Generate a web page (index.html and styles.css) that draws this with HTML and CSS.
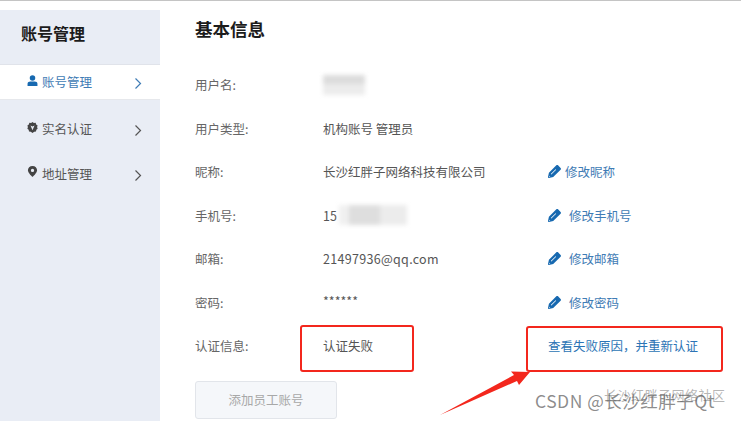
FILE: index.html
```
<!DOCTYPE html>
<html lang="zh">
<head>
<meta charset="utf-8">
<title>账号管理</title>
<link rel="stylesheet" href="styles.css">
</head>
<body>
<div class="page">
  <aside class="side">
    <h2 class="side-title">账号管理</h2>
    <a class="nav active">
      <svg class="nav-icon" viewBox="0 0 12 12"><circle cx="6" cy="3.2" r="3"/><path d="M.6 12V9.6C.6 7.9 2 7 3.6 7h4.800C10 7 11.400 7.900 11.400 9.600V12Z"/></svg>
      <span class="nav-text">账号管理</span>
      <svg class="chev" viewBox="0 0 8 12"><path d="M1.500 1 6.500 6 1.500 11"/></svg>
    </a>
    <a class="nav">
      <svg class="nav-icon" viewBox="0 0 12 12"><path fill-rule="evenodd" d="M6 0 7.500 1.100 9.400 .9 10 2.700 11.600 3.700 11 5.500 11.600 7.300 10.200 8.500 9.800 10.400 7.900 10.500 6 12 4.100 10.500 2.200 10.400 1.800 8.500.4 7.300 1 5.500.4 3.700 2 2.700 2.600.9 4.500 1.100ZM3.800 3.800 6 9 8.200 3.800 6 4.800Z"/></svg>
      <span class="nav-text">实名认证</span>
      <svg class="chev" viewBox="0 0 8 12"><path d="M1.500 1 6.500 6 1.500 11"/></svg>
    </a>
    <a class="nav">
      <svg class="nav-icon" viewBox="0 0 12 12"><path fill-rule="evenodd" d="M6 0C2.900 0 1 2.100 1 4.700 1 7.800 6 12 6 12S11 7.800 11 4.700C11 2.100 9.100 0 6 0ZM6 3A1.800 1.800 0 1 1 6 6.600 1.800 1.800 0 0 1 6 3Z"/></svg>
      <span class="nav-text">地址管理</span>
      <svg class="chev" viewBox="0 0 8 12"><path d="M1.500 1 6.500 6 1.500 11"/></svg>
    </a>
  </aside>
  <main class="main">
    <h1 class="title">基本信息</h1>
    <div class="rows">
      <div class="label">用户名:</div>
      <div class="value"><span class="smudge smudge-name"></span></div>
      <div class="action"></div>

      <div class="label">用户类型:</div>
      <div class="value">机构账号 管理员</div>
      <div class="action"></div>

      <div class="label">昵称:</div>
      <div class="value">长沙红胖子网络科技有限公司</div>
      <a class="action tight"><svg class="pen" viewBox="0 0 14 14"><use href="#pen"/></svg>修改昵称</a>

      <div class="label">手机号:</div>
      <div class="value">15<span class="smudge smudge-phone"></span></div>
      <a class="action"><svg class="pen" viewBox="0 0 14 14"><use href="#pen"/></svg>修改手机号</a>

      <div class="label">邮箱:</div>
      <div class="value email">21497936@qq.com</div>
      <a class="action"><svg class="pen" viewBox="0 0 14 14"><use href="#pen"/></svg>修改邮箱</a>

      <div class="label">密码:</div>
      <div class="value stars">******</div>
      <a class="action"><svg class="pen" viewBox="0 0 14 14"><use href="#pen"/></svg>修改密码</a>

      <div class="label">认证信息:</div>
      <div class="value">认证失败</div>
      <a class="action plain">查看失败原因，并重新认证</a>
    </div>
    <button class="add" type="button">添加员工账号</button>
  </main>
</div>

<svg class="defs" width="0" height="0">
  <symbol id="pen" viewBox="0 0 14 14">
    <path fill="#1769b0" d="M9 .4C9.600-.1 10.300-.1 10.800.4L13.600 3.200C14.100 3.700 14.100 4.400 13.600 5L5.600 13 1 14C.4 14.100-.1 13.600 0 13L1 8.400Z"/>
    <path fill="#fff" d="M3 9.700 8.200 4.500 8.800 5.100 3.600 10.300ZM1.500 11.500 2.500 12.500 1.200 12.800Z"/>
  </symbol>
</svg>

<div class="mark mark-left"></div>
<div class="mark mark-right"></div>
<svg class="arrow" viewBox="0 0 96 52"><path fill="#f3271d" d="M2 49 76 9 73 5.500 92 6 81 19 79 15Z"/></svg>
<div class="watermark">CSDN @长沙红胖子Qt</div>
<div class="watermark ghost">长沙红胖子网络社区</div>
</body>
</html>
```
FILE: styles.css
```
* { box-sizing: border-box; }
html, body { margin: 0; padding: 0; }
body {
  width: 741px;
  height: 421px;
  overflow: hidden;
  position: relative;
  background: #fff;
  color: #555;
  font-family: "Noto Sans CJK SC", "Liberation Sans", sans-serif;
  font-size: 12.500px;
}
.page {
  display: flex;
  height: 421px;
  border-top: 1px solid #c4c4c4;
}
.side {
  width: 160px;
  margin-top: 9px;
  background: #e9edf5;
  flex: none;
}
.side-title {
  margin: 0;
  height: 55px;
  padding: 12px 0 0 21px;
  font-size: 16px;
  line-height: 22px;
  font-weight: 700;
  color: #1c1c1c;
  border-bottom: 1px solid #e0e3ea;
}
.nav {
  display: flex;
  align-items: center;
  height: 44.500px;
  padding-left: 27px;
  color: #555;
}
.nav.active {
  height: 35px;
  background: #fff;
  color: #3f7cb5;
  border-bottom: 1px solid #e6e8ec;
  margin-bottom: 7px;
}
.nav-icon {
  width: 11px;
  height: 11px;
  margin-right: 4px;
  fill: #444;
  flex: none;
  transform: translateY(-2px);
}
.active .nav-icon { fill: #1769b0; }
.nav-text { width: 92px; line-height: 18px; }
.chev {
  width: 8px;
  height: 12px;
  fill: none;
  stroke: #555;
  stroke-width: 1.200;
  flex: none;
  transform: translateY(1.500px);
}
.active .chev { stroke: #3f7cb5; }
.main {
  flex: 1;
  padding-left: 35px;
}
.title {
  margin: 0;
  height: 62px;
  padding-top: 16px;
  font-size: 17.500px;
  line-height: 24px;
  font-weight: 700;
  color: #1c1c1c;
}
.rows {
  display: grid;
  grid-template-columns: 128px 225px 1fr;
  grid-auto-rows: 43.500px;
  align-items: center;
}
.label { color: #666; }
.value { color: #555; display: flex; align-items: center; }
.email { letter-spacing: .3px; }
.stars { padding-bottom: 3px; }
.action {
  display: flex;
  align-items: center;
  color: #3f7cb5;
  min-height: 1px;
}
.plain { color: #2c74b5; white-space: nowrap; }
.pen { width: 13px; height: 13px; margin-right: 8px; flex: none; }
.tight .pen { margin-right: 4px; }
.smudge {
  display: inline-block;
  filter: blur(2px);
}
.smudge-name {
  width: 42px;
  height: 20px;
  background: linear-gradient(#dcdcdc 45%, #ececec 45%);
}
.smudge-phone {
  width: 68px;
  height: 20px;
  margin-left: 2px;
  background: linear-gradient(90deg, #f0f0f0 15%, #dedede 15% 60%, #ececec 60%);
}
.add {
  display: block;
  width: 142px;
  height: 38px;
  margin-top: 13px;
  padding: 0;
  border: 1px solid #e2e5ea;
  border-radius: 3px;
  background: #f5f7fa;
  color: #a8a8a8;
  font: inherit;
}
.defs { position: absolute; }
.mark {
  position: absolute;
  border: 2px solid #f3271d;
  border-radius: 3px;
}
.mark-left { left: 300px; top: 325px; width: 114px; height: 47px; }
.mark-right { left: 526px; top: 326px; width: 197px; height: 46px; }
.arrow {
  position: absolute;
  left: 438px;
  top: 366px;
  width: 96px;
  height: 52px;
}
.watermark {
  position: absolute;
  left: 535px;
  top: 389px;
  font-size: 17.500px;
  line-height: 24px;
  letter-spacing: .5px;
  color: rgba(90, 90, 90, .7);
  white-space: nowrap;
}
.ghost {
  left: 604px;
  top: 385px;
  font-size: 13px;
  line-height: 20px;
  color: rgba(90, 90, 90, .45);
}
```
